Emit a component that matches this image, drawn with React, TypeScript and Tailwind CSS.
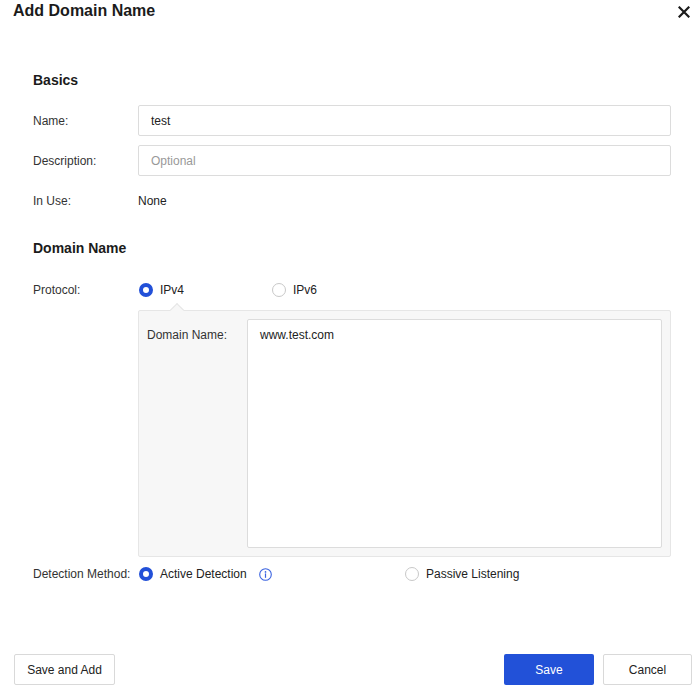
import React from 'react';

function Radio({ checked }: { checked: boolean }) {
  return checked ? (
    <span className="box-border inline-block h-[14px] w-[14px] shrink-0 rounded-full border-[4px] border-[#2250d8] bg-white" />
  ) : (
    <span className="box-border inline-block h-[14px] w-[14px] shrink-0 rounded-full border border-[#c8c8c8] bg-white" />
  );
}

function InfoIcon() {
  return (
    <svg width="13" height="13" viewBox="0 0 13 13" className="shrink-0">
      <circle cx="6.5" cy="6.5" r="5.8" fill="none" stroke="#3a63e0" strokeWidth="1.1" />
      <circle cx="6.5" cy="3.9" r="0.85" fill="#3a63e0" />
      <rect x="5.9" y="5.4" width="1.2" height="4.4" fill="#3a63e0" />
    </svg>
  );
}

export default function App() {
  return (
    <div
      className="relative flex h-[691px] w-[700px] flex-col bg-white text-[12px] text-[#333]"
      style={{ fontFamily: '"Liberation Sans", Arial, sans-serif' }}
    >
      {/* Header */}
      <header className="flex h-[22px] items-center justify-between pl-[13px] pr-[10px]">
        <h1 className="text-[16px] font-bold leading-[22px] text-[#1b1b1b]">Add Domain Name</h1>
        <svg width="12" height="12" viewBox="0 0 12 12" className="mt-[2px]">
          <path d="M1.5 1.5 L10.5 10.5 M10.5 1.5 L1.5 10.5" stroke="#1b1b1b" strokeWidth="2.2" strokeLinecap="square" />
        </svg>
      </header>

      {/* Body */}
      <main className="flex flex-col pl-[33px] pr-[29px]">
        <h2 className="mt-[48px] h-[20px] text-[14px] font-bold leading-[20px] text-[#1b1b1b]">Basics</h2>

        <div className="mt-[15px] flex h-[31px] items-center">
          <span className="w-[105px] shrink-0">Name:</span>
          <div className="box-border flex h-[31px] flex-1 items-center rounded-[2px] border border-[#dcdcdc] px-[12px] text-[#222]">test</div>
        </div>
        <div className="mt-[9px] flex h-[31px] items-center">
          <span className="w-[105px] shrink-0">Description:</span>
          <div className="box-border flex h-[31px] flex-1 items-center rounded-[2px] border border-[#dcdcdc] px-[12px] text-[#999]">Optional</div>
        </div>
        <div className="mt-[9px] flex h-[31px] items-center">
          <span className="w-[105px] shrink-0">In Use:</span>
          <span className="text-[#222]">None</span>
        </div>

        <h2 className="mt-[22px] h-[20px] text-[14px] font-bold leading-[20px] text-[#1b1b1b]">Domain Name</h2>

        <div className="mt-[22px] flex h-[20px] items-center">
          <span className="w-[105px] shrink-0">Protocol:</span>
          <label className="flex w-[134px] items-center gap-[7px] pl-[1px]">
            <Radio checked />
            <span className="text-[#222]">IPv4</span>
          </label>
          <label className="flex items-center gap-[7px]">
            <Radio checked={false} />
            <span className="text-[#222]">IPv6</span>
          </label>
        </div>

        <div className="ml-[105px] mt-[10px]">
          <div className="relative box-border flex h-[247px] rounded-[2px] border border-[#e6e6e6] bg-[#f7f7f7] p-[8px]">
            <span className="absolute left-[33px] top-[-6px] h-[10px] w-[10px] rotate-45 border-l border-t border-[#e6e6e6] bg-[#f7f7f7]" />
            <span className="w-[100px] shrink-0 pt-[8px] leading-[16px]">Domain Name:</span>
            <div className="box-border flex-1 rounded-[2px] border border-[#dcdcdc] bg-white px-[12px] pt-[7px] leading-[16px] text-[#222]">
              www.test.com
            </div>
          </div>
        </div>

        <div className="mt-[7px] flex h-[20px] items-center">
          <span className="w-[105px] shrink-0">Detection Method:</span>
          <label className="flex w-[267px] items-center gap-[7px] pl-[1px]">
            <Radio checked />
            <span className="text-[#222]">Active Detection</span>
            <span className="ml-[5px] flex items-center">
              <InfoIcon />
            </span>
          </label>
          <label className="flex items-center gap-[7px]">
            <Radio checked={false} />
            <span className="text-[#222]">Passive Listening</span>
          </label>
        </div>
      </main>

      {/* Footer */}
      <footer className="mt-auto flex items-center justify-between pb-[6px] pl-[14px] pr-[8px]">
        <button className="box-border h-[31px] w-[101px] rounded-[2px] border border-[#d9d9d9] bg-white text-[12px] text-[#222]">
          Save and Add
        </button>
        <div className="flex gap-[9px]">
          <button className="box-border h-[31px] w-[90px] rounded-[2px] bg-[#2251d8] text-[12px] text-white">Save</button>
          <button className="box-border h-[31px] w-[89px] rounded-[2px] border border-[#d9d9d9] bg-white text-[12px] text-[#222]">
            Cancel
          </button>
        </div>
      </footer>
    </div>
  );
}
